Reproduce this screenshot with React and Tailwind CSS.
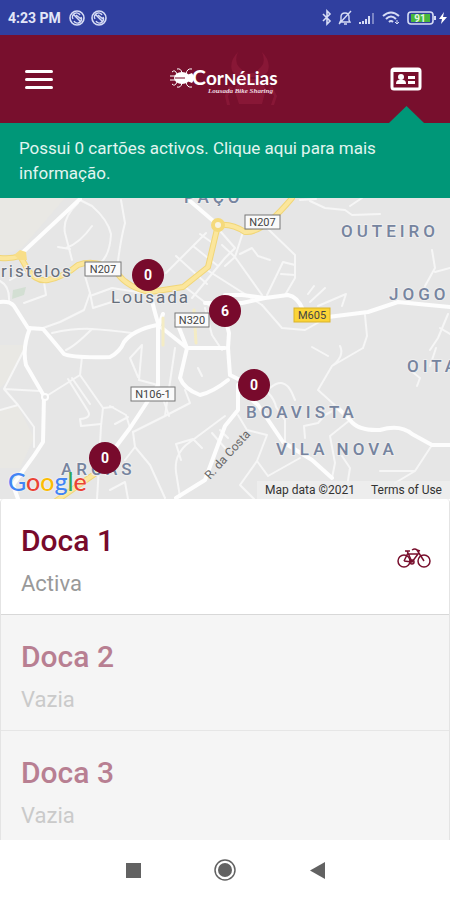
import { useState } from 'react'
import clsx from 'clsx'

const docks = [
  { id: 1, name: 'Doca 1', status: 'Activa', active: true },
  { id: 2, name: 'Doca 2', status: 'Vazia', active: false },
  { id: 3, name: 'Doca 3', status: 'Vazia', active: false },
]

// x / y are positions on the 450 x 301 map drawing
const stations = [
  { id: 'lousada', x: 148, y: 77, bikes: 0 },
  { id: 'centro', x: 225, y: 113, bikes: 6 },
  { id: 'boavista', x: 254, y: 187, bikes: 0 },
  { id: 'arcas', x: 105, y: 260, bikes: 0 },
]

const shields = [
  { x: 85, y: 64, w: 36, label: 'N207' },
  { x: 245, y: 17, w: 35, label: 'N207' },
  { x: 175, y: 115, w: 34, label: 'N320' },
  { x: 131, y: 189, w: 44, label: 'N106-1' },
  { x: 294, y: 110, w: 36, label: 'M605', yellow: true },
]

const places = [
  { x: 184, y: 5, label: 'PAÇO' },
  { x: 341, y: 39, label: 'OUTEIRO' },
  { x: 389, y: 102, label: 'JOGO' },
  { x: 407, y: 174, label: 'OITA' },
  { x: 246, y: 220, label: 'BOAVISTA' },
  { x: 276, y: 257, label: 'VILA NOVA' },
  { x: 61, y: 277, label: 'ARCAS' },
]

const minorRoads = [
  'M80 2 L92 8 Q108 22 111 36 Q110 58 99 66',
  'M78 5 Q62 20 65 35 L72 62',
  'M66 50 Q80 45 92 28 M58 49 L70 51',
  'M121 2 L125 25 Q121 40 118 63',
  'M166 75 L193 48 L218 68 M176 58 L207 86 M200 36 L214 46 M193 48 L206 35',
  'M207 72 L262 107 M185 89 L215 112 M192 100 L225 60 L235 50 L221 34',
  'M243 34 L235 59 L262 97 M225 68 L235 59 M235 59 L222 47',
  'M240 56 L252 50 L258 58 L270 62',
  'M267 30 L295 57 V80 L285 97 M295 67 L283 64 L267 97 M281 76 L295 77',
  'M262 107 L282 130 L305 132 L328 119 M310 104 L325 90 M318 108 L346 96 L342 108 M308 96 L314 88',
  'M85 78 L90 95 L84 112 L60 124 L43 130',
  'M90 95 L93 110 L118 102 M90 98 L112 90 L150 96',
  'M0 83 Q10 88 9 104 M28 72 L10 82 M44 84 L46 97 L24 105',
  'M52 135 Q75 130 92 131 T132 135 M92 131 Q75 148 66 152',
  'M45 199 L80 177 L82 159 M80 177 L103 210 L101 228 L100 246',
  'M68 181 L88 213 Q92 220 80 221 L81 228 L101 226 M72 180 L90 206',
  'M25 150 L4 191 L18 207 L34 229 V249 M4 191 L40 193 M0 212 L18 207',
  'M142 147 L139 182 L158 187 M142 147 L130 160 L138 179',
  'M175 150 L165 218 L133 234 M185 192 L190 205 L165 218',
  'M158 186 L169 218 M133 234 L135 249 L125 262 M135 249 L150 267 L165 300',
  'M110 208 L126 217 L130 230 M103 210 L113 209 M115 226 L128 219',
  'M100 246 L98 285 L97 301 M110 292 L125 284 L128 301',
  'M176 274 Q174 258 186 247 L225 218 M176 274 L180 299 M176 246 L193 241 L202 250 M176 246 L181 262',
  'M212 235 L225 250 M220 232 L228 240',
  'M238 217 L247 232 L267 237 L257 263 L240 287 L254 301 M257 263 L268 278 M268 278 L300 260',
  'M250 187 Q272 191 276 209 L285 222 V244 M270 190 Q284 178 292 195 L295 202',
  'M305 240 L304 228 L318 225 L325 217 L338 210 M330 238 L350 222 M330 238 L335 265 L332 280 M342 258 L350 270 L345 301',
  'M363 150 L332 168 L318 192 L338 210 M312 149 L328 158 M332 168 Q345 158 340 148',
  'M365 117 L367 138 L363 150 M448 116 L438 140 L430 152 M440 130 L450 136',
  'M432 247 L415 273 L395 285 M415 273 L380 273',
  'M310 3 L325 10 L345 12 L352 17 L380 16 M362 0 L350 8 M300 2 L316 1',
  'M432 52 L435 70 L425 88 M435 74 L450 70',
  'M410 172 L420 180 L417 188 M430 168 L436 150',
  'M198 170 L202 178 M205 110 L212 137 L222 152',
]

const mainRoads = [
  'M22 55 L80 1',
  'M190 3 L218 27',
  'M0 104 Q10 103 14 108 L28 130 L43 131 Q55 145 64 156 Q72 160 110 159 Q120 154 124 144 Q133 132 157 127',
  'M30 130 Q22 150 26 167 L44 198 L43 244 Q35 257 25 270 L13 287 L18 301',
  'M150 94 Q154 112 158 125 V187 Q150 200 130 230 L112 254',
  'M162 130 L187 150 H225 M187 150 L180 180 Q184 191 200 197 Q213 194 228 182',
  'M163 116 L158 130 M176 122 L187 150 M205 105 H242 L265 100 L288 97 Q298 99 303 112 L328 119 L368 114 L398 104 L450 109',
  'M225 97 H242 L265 100 M225 120 L229 135 L228 150 L230 177 L250 187',
  'M254 192 L238 187 V212 L225 228 L205 282 L176 300',
  'M238 190 L258 207 L283 244 L312 262 L332 280',
  'M338 210 L350 222 Q358 233 380 232 Q400 226 412 236 L432 247 H450',
]

const highway =
  'M0 60 Q12 61 20 58 L28 72 Q36 84 48 82 Q64 79 78 67 Q97 60 117 75 Q128 90 150 94 L183 89 L208 69 L218 27 Q232 25 245 34 Q262 36 292 0 M96 275 L56 303'

function CityMap() {
  return (
    <svg
      viewBox="0 0 450 301"
      preserveAspectRatio="none"
      className="block h-full w-full font-['Roboto',sans-serif]"
      role="img"
      aria-label="Map of Lousada"
    >
      <rect width="450" height="301" fill="#e6e6e6" />
      <path d="M0 0 H65 L22 50 L0 58 Z M0 147 H26 L10 180 L0 190 Z M0 212 L18 208 L34 240 L20 270 H0 Z" fill="#e9e8e4" />
      <path d="M13 92 L26 89 L24 97 L12 101 Z" fill="#d3dfd3" />
      <g fill="none" strokeLinecap="round" strokeLinejoin="round">
        <g stroke="#f6f6f6" strokeWidth="2">
          {minorRoads.map((d) => <path key={d} d={d} />)}
        </g>
        <g stroke="#fdfdfd" strokeWidth="4">
          {mainRoads.map((d) => <path key={d} d={d} />)}
        </g>
        <path d="M163 120 V147 M194 112 L196 145" stroke="#f4ecc4" strokeWidth="3" />
        <path d={highway} stroke="#f1d678" strokeWidth="6" />
        <path d={highway} stroke="#fbe69c" strokeWidth="4" />
        <circle cx="218" cy="27" r="5" fill="#f7f3e4" stroke="#f5da7c" strokeWidth="4" />
        <path d="M14 57 L20 52 L26 54 L27 62 L20 62 Z" fill="#f8de88" />
        <circle cx="45" cy="199" r="3" fill="#e6e6e6" stroke="#fdfdfd" strokeWidth="2" />
      </g>

      {shields.map((s) => (
        <g key={`${s.label}-${s.x}`}>
          <rect
            x={s.x}
            y={s.y}
            width={s.w}
            height="14"
            fill={s.yellow ? '#fbd437' : '#fafafa'}
            stroke={s.yellow ? '#d9b32c' : '#777777'}
          />
          <text x={s.x + s.w / 2} y={s.y + 11} textAnchor="middle" className="text-[11px]" fill="#444444">
            {s.label}
          </text>
        </g>
      ))}

      {places.map((p) => (
        <text key={p.label} x={p.x} y={p.y} className="text-[17px] font-medium tracking-[4px]" fill="#76849f" stroke="#eeeeee" strokeWidth="2" paintOrder="stroke">
          {p.label}
        </text>
      ))}
      <g className="text-[17px] tracking-[2px]" fill="#666e7b" stroke="#eeeeee" strokeWidth="2" paintOrder="stroke">
        <text x="1" y="79">ristelos</text>
        <text x="111" y="105">Lousada</text>
      </g>
      <text x="210" y="282" transform="rotate(-48 210 282)" className="text-[12px]" fill="#666666">
        R. da Costa
      </text>
    </svg>
  )
}

function NotificationIcon() {
  return (
    <svg width="16" height="16" viewBox="0 0 16 16" fill="none" stroke="#d6dcf5">
      <circle cx="8" cy="8" r="7" strokeWidth="1.6" />
      <path d="M4 9 A4 4 0 0 1 11 5 M12 7 A4 4 0 0 1 5 11 M5 5 L11 11 M7 5 L12 9" strokeWidth="1.5" />
    </svg>
  )
}

function StatusIcons() {
  return (
    <svg width="126" height="18" viewBox="0 0 126 18" fill="none" stroke="#d6dcf5" role="img" aria-label="Battery 91%">
      {/* Bluetooth */}
      <path d="M1 5 L8 12 L5 15 V2 L8 5 L1 12" strokeWidth="1.6" />
      {/* Muted bell */}
      <path d="M18 13 H28 L27 11 V8 Q27 4 23 4 Q19 4 19 8 V11 Z M22 15 H25 M29 2 L17 15" strokeWidth="1.4" />
      {/* Signal */}
      <path d="M38 15 V13 M41 15 V12 M44 15 V10 M47 15 V7" strokeWidth="2" />
      <path d="M51 15 V4" strokeWidth="2" opacity="0.45" />
      {/* Wifi */}
      <path d="M61 7 Q69 0 77 7 M64 10 Q69 5 74 10 M67 13 Q69 11 71 13" strokeWidth="2" />
      <path d="M75 11 V15 M73 13 L75 15 L77 13" strokeWidth="1" />
      {/* Battery */}
      <rect x="86" y="3" width="25" height="12" rx="3" strokeWidth="1.6" />
      <rect x="89" y="5" width="19" height="8" fill="#48b83c" stroke="none" />
      <path d="M113 7 V11" strokeWidth="2" />
      <text x="98" y="13" textAnchor="middle" className="font-['Roboto',sans-serif] text-[10px] font-bold" fill="#e5f5e5" stroke="none">
        91
      </text>
      <path d="M122 3 L117 10 H120 L119 15 L125 8 H121 Z" fill="#ffffff" stroke="none" />
    </svg>
  )
}

function Logo() {
  return (
    <svg width="120" height="60" viewBox="0 0 120 60" role="img" aria-label="Cornélias Lousada Bike Sharing">
      {/* Stag beetle watermark */}
      <g fill="#881736">
        <path d="M73 3 Q64 12 67 22 Q71 28 78 28 H92 Q100 27 103 22 Q106 12 97 3 Q101 13 96 18 Q92 21 91 24 H79 Q78 21 74 18 Q69 12 73 3 Z" />
        <path d="M76 30 H95 L101 40 L97 55 H74 L69 40 Z" />
        <path d="M64 37 L60 47 L62 56 L65 56 L63 47 L68 39 Z M107 37 L112 47 L109 56 L106 56 L109 47 L104 39 Z" />
      </g>
      {/* Beetle */}
      <g fill="none" stroke="#ffffff">
        <ellipse cx="17" cy="29" rx="8" ry="6" fill="#ffffff" stroke="none" />
        <path d="M22 26 L27 24 L30 29 L27 34 L22 32 Z" fill="#ffffff" stroke="none" />
        <path d="M10 29 H20" stroke="#780f2d" strokeWidth="1" />
        <path d="M12 25 Q10 20 7 23 M12 33 Q10 38 7 35 M17 24 Q16 19 12 20 M17 34 Q16 39 12 38 M21 25 Q22 19 27 20 M21 33 Q22 39 27 38 M5 27 H10 M5 31 H10" strokeWidth="1" />
      </g>
      <text x="27" y="36" className="font-['Lato',sans-serif] text-[19px] font-bold" fill="#ffffff">
        <tspan className="text-[21px]">C</tspan>or<tspan className="text-[16px]">N</tspan>é<tspan className="text-[16px]">L</tspan>ias
      </text>
      <text x="43" y="44" className="font-['Liberation_Serif',serif] text-[7px] font-bold italic" fill="#f0dce2">
        Lousada Bike Sharing
      </text>
    </svg>
  )
}

function BikeIcon() {
  return (
    <svg width="34" height="22" viewBox="0 0 34 22" fill="none" stroke="#780f2d" strokeWidth="1.5" role="img" aria-label="Bicicleta">
      <circle cx="7" cy="14" r="6" />
      <circle cx="27" cy="14" r="6" />
      <path d="M7 14 L11 6 L15 15 L21 7 H11 M7 14 L15 15 M8 4 H13 M11 6 L10 4 M27 14 L20 3 Q18 1 15 3 M20 3 L23 4" />
      <circle cx="15" cy="15" r="2" />
    </svg>
  )
}

export default function App() {
  const [selected, setSelected] = useState(1)

  return (
    <div className="flex h-screen flex-col overflow-hidden bg-white font-['Roboto',sans-serif]">
      {/* Status bar */}
      <div className="flex h-[35px] shrink-0 items-center justify-between bg-[#303f9f] pr-0.5 pl-2">
        <div className="flex items-center gap-2">
          <span className="text-sm font-bold text-[#e3e7f8]">4:23 PM</span>
          <div className="flex gap-1.5">
            <NotificationIcon />
            <NotificationIcon />
          </div>
        </div>
        <StatusIcons />
      </div>

      {/* App header */}
      <header className="relative flex h-[88px] shrink-0 items-center justify-between bg-[#780f2d] px-6">
        <button type="button" aria-label="Menu" className="flex h-9 w-10 flex-col items-start justify-center gap-[5px] pl-px">
          <span className="h-[3px] w-7 rounded-full bg-white" />
          <span className="h-[3px] w-7 rounded-full bg-white" />
          <span className="h-[3px] w-7 rounded-full bg-white" />
        </button>
        <Logo />
        <button type="button" aria-label="Cartões" className="flex h-9 w-10 items-center justify-center">
          <svg width="32" height="24" viewBox="0 0 32 24" fill="none">
            <rect x="2" y="2" width="28" height="20" rx="2" stroke="#ffffff" strokeWidth="3" />
            <path d="M2 3 H30" stroke="#ffffff" strokeWidth="4" />
            <circle cx="11" cy="10" r="3" fill="#ffffff" />
            <path d="M6 17 Q6 13 9 13 H13 Q16 13 16 17 Z M18 9 H25 V12 H18 Z M18 14 H25 V17 H18 Z" fill="#ffffff" />
          </svg>
        </button>
        <span className="absolute right-[26px] bottom-0 h-[17px] w-[35px] bg-[#009778] [clip-path:polygon(50%_0,100%_100%,0_100%)]" />
      </header>

      {/* Cards notice */}
      <a href="#cartoes" className="block shrink-0 bg-[#009778] px-[19px] pt-[13px] pb-3 text-[17px] leading-[25px] text-[#e2f5f0]">
        Possui 0 cartões activos. Clique aqui para mais informação.
      </a>

      {/* Map */}
      <section className="relative h-[301px] shrink-0 overflow-hidden">
        <CityMap />
        {stations.map((s) => (
          <button
            key={s.id}
            type="button"
            className="absolute flex size-8 -translate-x-1/2 -translate-y-1/2 items-center justify-center rounded-full bg-[#780a2c] text-sm font-bold text-white"
            style={{ left: `${(s.x / 450) * 100}%`, top: `${(s.y / 301) * 100}%` }}
          >
            {s.bikes}
          </button>
        ))}
        <div className="absolute inset-x-0 bottom-0 flex items-end justify-between pl-2">
          <a href="#google" className="font-['Lato',sans-serif] text-[25px] leading-9 font-medium [text-shadow:0_0_2px_white]">
            <span className="text-[#4285f4]">G</span>
            <span className="text-[#ea4335]">o</span>
            <span className="text-[#fbbc05]">o</span>
            <span className="text-[#4285f4]">g</span>
            <span className="text-[#34a853]">l</span>
            <span className="text-[#ea4335]">e</span>
          </a>
          <div className="flex gap-4 bg-[#f0f0f0]/70 px-2 text-xs leading-[18px] text-[#333333]">
            <span>Map data ©2021</span>
            <a href="#terms">Terms of Use</a>
          </div>
        </div>
      </section>

      {/* Docks */}
      <ul className="min-h-0 flex-1 overflow-hidden rounded-t border-x border-[#e4e4e4] bg-[#f5f5f5]">
        {docks.map((dock) => (
          <li key={dock.id} className={clsx('border-b', dock.active ? 'border-[#d8d8d8] bg-white' : 'border-[#e6e6e6]')}>
            <button
              type="button"
              disabled={!dock.active}
              aria-pressed={selected === dock.id}
              onClick={() => setSelected(dock.id)}
              className="flex w-full items-center justify-between pt-[19px] pr-[18px] pb-[17px] pl-5 text-left"
            >
              <span className="flex flex-col gap-2">
                <span className={clsx('text-3xl leading-[45px] font-medium', dock.active ? 'text-[#780a2c]' : 'text-[#b87f92]')}>
                  {dock.name}
                </span>
                <span className={clsx('text-[22px] leading-[26px]', dock.active ? 'text-[#999999]' : 'text-[#cacaca]')}>
                  {dock.status}
                </span>
              </span>
              {dock.active && <BikeIcon />}
            </button>
          </li>
        ))}
      </ul>

      {/* Android navigation */}
      <nav className="flex h-[60px] shrink-0 items-center justify-center gap-[68px] bg-white">
        <button type="button" aria-label="Recentes" className="flex size-6 items-center justify-center">
          <span className="size-[15px] bg-[#626262]" />
        </button>
        <button type="button" aria-label="Início" className="flex size-6 items-center justify-center rounded-full">
          <svg width="24" height="24" viewBox="0 0 24 24">
            <circle cx="12" cy="12" r="10" fill="none" stroke="#626262" strokeWidth="1.5" />
            <circle cx="12" cy="12" r="7" fill="#626262" />
          </svg>
        </button>
        <button type="button" aria-label="Voltar" className="flex size-6 items-center justify-center">
          <svg width="15" height="17" viewBox="0 0 15 17">
            <path d="M0 8.5 L15 0 V17 Z" fill="#626262" />
          </svg>
        </button>
      </nav>
    </div>
  )
}
